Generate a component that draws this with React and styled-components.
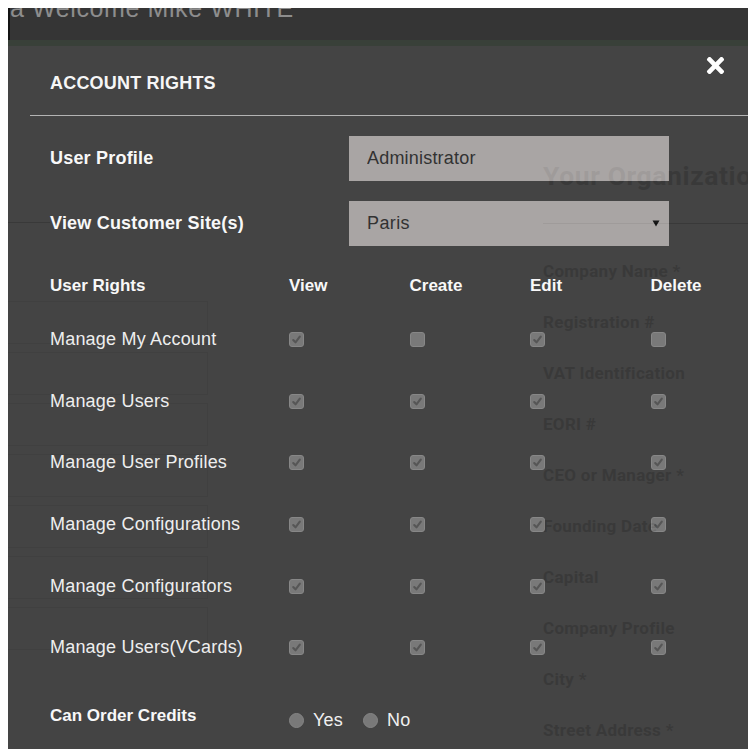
import React from "react";
import styled, { createGlobalStyle } from "styled-components";
import { FaTimes } from "react-icons/fa";

const GlobalStyle = createGlobalStyle`
  html, body { overflow: hidden; }
  body {
    margin: 8px;
    background: #ffffff;
    font-family: "Liberation Sans", Arial, sans-serif;
  }
  * { box-sizing: border-box; }
`;

const Screen = styled.div`
  width: calc(100vw - 8px);
  height: calc(100vh - 8px);
  display: flex;
  flex-direction: column;
  background: #ffffff;
  overflow: hidden;
`;

const TopBar = styled.header`
  flex: none;
  height: 32px;
  background: #353535;
  border-left: 2px solid #141414;
  overflow: hidden;
`;

const Greeting = styled.div`
  margin-top: -12px;
  font-size: 25px;
  line-height: 25px;
  letter-spacing: 0.6px;
  color: #8d8d8d;
  white-space: nowrap;
`;

const AccentStrip = styled.div`
  flex: none;
  height: 6px;
  background: #394039;
`;

/* the page under the dialog: white, with its own form */
const Stage = styled.main`
  position: relative;
  flex: 1;
  overflow: hidden;
  background: #ffffff;
`;

const Backdrop = styled.div`
  display: grid;
  grid-template-columns: 200px 1fr;
`;

const SideColumn = styled.div`
  display: flex;
  flex-direction: column;
`;

const SideRule = styled.div`
  width: 42px;
  height: 1px;
  margin-top: 176px;
  background: #333333;
`;

const SideList = styled.div`
  display: flex;
  flex-direction: column;
  gap: 8px;
  margin-top: 78px;
`;

const SideBox = styled.div`
  height: 43px;
  border: 1px solid #b8b8b8;
  border-left: none;
`;

const FormColumn = styled.div`
  padding-left: 335px;
  display: flex;
  flex-direction: column;
  font-family: Roboto, "Liberation Sans", sans-serif;
  font-weight: 700;
  color: #333333;
  white-space: nowrap;
`;

const FormHeading = styled.h2`
  margin: 114px 0 0;
  font-size: 26.5px;
  line-height: 31px;
  letter-spacing: 0.6px;
  font-weight: 700;
`;

const FormRule = styled.div`
  height: 1px;
  margin-top: 32px;
  background: #333333;
`;

const FormFields = styled.div`
  display: flex;
  flex-direction: column;
  gap: 31px;
  margin-top: 37px;
`;

const FormLabel = styled.div`
  font-size: 17px;
  line-height: 20px;
  letter-spacing: 0.3px;
`;

/* the dialog, slightly see-through over the page */
const Dialog = styled.section`
  position: absolute;
  inset: 0;
  display: flex;
  flex-direction: column;
  padding: 0 6px 0 22px;
  background: #3a3a3a;
  opacity: 0.95;
  color: #f6f6f6;
`;

const DialogHeader = styled.div`
  flex: none;
  height: 69px;
  display: flex;
  justify-content: space-between;
  align-items: flex-start;
  padding: 0 22px 0 20px;
`;

const DialogTitle = styled.h1`
  margin: 27px 0 0;
  font-size: 18px;
  line-height: 20px;
  letter-spacing: 0.2px;
  font-weight: 700;
  color: #f6f6f6;
`;

const CloseButton = styled.button`
  margin-top: 7px;
  padding: 0;
  border: none;
  background: none;
  color: #ffffff;
  display: flex;
  cursor: pointer;
`;

const Divider = styled.hr`
  flex: none;
  margin: 0;
  height: 1px;
  border: none;
  background: #b0b0b0;
`;

const DialogBody = styled.div`
  padding-left: 20px;
  display: flex;
  flex-direction: column;
`;

const FieldRow = styled.div`
  display: grid;
  grid-template-columns: 299px 320px;
  align-items: center;
  height: 45px;
  margin-top: 20px;
`;

const labelVariants = {
  field: "font-size: 18px; letter-spacing: 0.2px; font-weight: 700; color: #f8f8f8;",
  head: "font-size: 17px; letter-spacing: 0; font-weight: 700; color: #f8f8f8;",
  item: "font-size: 18px; letter-spacing: 0.2px; font-weight: 400; color: #eeeeee;",
};

const Label = styled.span`
  white-space: nowrap;
  ${(p) => labelVariants[p.$variant || "item"]}
`;

const TextField = styled.input`
  width: 320px;
  height: 45px;
  border: none;
  outline: none;
  padding: 0 18px;
  background: #a5a1a0;
  color: #282828;
  font-family: "Liberation Sans", Arial, sans-serif;
  font-size: 18px;
  letter-spacing: 0.2px;
`;

const SelectBox = styled.div`
  width: 320px;
  height: 45px;
  display: flex;
  align-items: center;
  justify-content: space-between;
  padding: 0 9px 0 18px;
  background: #a5a1a0;
  color: #282828;
  font-size: 18px;
  letter-spacing: 0.4px;
`;

const RightsGrid = styled.div`
  display: grid;
  grid-template-columns: 239px repeat(4, 120.5px);
  grid-template-rows: 45.6px repeat(6, 61.7px);
  align-items: center;
  margin-top: 17px;
`;

const CheckBox = styled.span`
  display: inline-flex;
  align-items: center;
  justify-content: center;
  width: 15px;
  height: 15px;
  background: #727272;
  border: 1px solid #818181;
  border-radius: 3px;
`;

const CreditsRow = styled.div`
  display: grid;
  grid-template-columns: 239px auto;
  align-items: center;
  height: 62px;
  margin-top: 6px;
`;

const RadioGroup = styled.div`
  display: flex;
  align-items: center;
  gap: 20px;
  padding-top: 9px;
`;

const RadioOption = styled.label`
  display: flex;
  align-items: center;
  gap: 9px;
  font-size: 18px;
  letter-spacing: 0.2px;
  color: #f0f0f0;
`;

const Radio = styled.span`
  width: 15px;
  height: 15px;
  border-radius: 50%;
  background: #727272;
  border: 1px solid #7f7f7f;
`;

const backdropFields = [
  "Company Name *",
  "Registration #",
  "VAT Identification",
  "EORI #",
  "CEO or Manager *",
  "Founding Date",
  "Capital",
  "Company Profile",
  "City *",
  "Street Address *",
];

const rights = [
  ["Manage My Account", [1, 0, 1, 0]],
  ["Manage Users", [1, 1, 1, 1]],
  ["Manage User Profiles", [1, 1, 1, 1]],
  ["Manage Configurations", [1, 1, 1, 1]],
  ["Manage Configurators", [1, 1, 1, 1]],
  ["Manage Users(VCards)", [1, 1, 1, 1]],
];

function Check({ on }) {
  return (
    <CheckBox>
      {on ? (
        <svg width="11" height="11" viewBox="0 0 11 11">
          <path
            d="M2.2 6 L4.5 8.3 L8.8 2.6"
            fill="none"
            stroke="#4e4e4e"
            strokeWidth="2.1"
            strokeLinecap="round"
            strokeLinejoin="round"
          />
        </svg>
      ) : null}
    </CheckBox>
  );
}

export default function App() {
  return (
    <>
      <GlobalStyle />
      <Screen>
        <TopBar>
          <Greeting>a Welcome Mike WHITE</Greeting>
        </TopBar>
        <AccentStrip />
        <Stage>
          <Backdrop>
            <SideColumn>
              <SideRule />
              <SideList>
                {Array.from({ length: 7 }).map((_, i) => (
                  <SideBox key={i} />
                ))}
              </SideList>
            </SideColumn>
            <FormColumn>
              <FormHeading>Your Organization</FormHeading>
              <FormRule />
              <FormFields>
                {backdropFields.map((f) => (
                  <FormLabel key={f}>{f}</FormLabel>
                ))}
              </FormFields>
            </FormColumn>
          </Backdrop>

          <Dialog>
            <DialogHeader>
              <DialogTitle>ACCOUNT RIGHTS</DialogTitle>
              <CloseButton aria-label="Close">
                <FaTimes size={25} />
              </CloseButton>
            </DialogHeader>
            <Divider />
            <DialogBody>
              <FieldRow>
                <Label $variant="field">User Profile</Label>
                <TextField readOnly value="Administrator" />
              </FieldRow>
              <FieldRow>
                <Label $variant="field">View Customer Site(s)</Label>
                <SelectBox>
                  <span>Paris</span>
                  <svg width="8" height="7" viewBox="0 0 8 7">
                    <path d="M0.5 0.5 H7.5 L4 6.5 Z" fill="#0c0c0c" />
                  </svg>
                </SelectBox>
              </FieldRow>

              <RightsGrid>
                <Label $variant="head">User Rights</Label>
                <Label $variant="head">View</Label>
                <Label $variant="head">Create</Label>
                <Label $variant="head">Edit</Label>
                <Label $variant="head">Delete</Label>
                {rights.map(([name, flags]) => (
                  <React.Fragment key={name}>
                    <Label $variant="item">{name}</Label>
                    {flags.map((on, i) => (
                      <Check key={i} on={on} />
                    ))}
                  </React.Fragment>
                ))}
              </RightsGrid>

              <CreditsRow>
                <Label $variant="head">Can Order Credits</Label>
                <RadioGroup>
                  <RadioOption>
                    <Radio />
                    Yes
                  </RadioOption>
                  <RadioOption>
                    <Radio />
                    No
                  </RadioOption>
                </RadioGroup>
              </CreditsRow>
            </DialogBody>
          </Dialog>
        </Stage>
      </Screen>
    </>
  );
}
